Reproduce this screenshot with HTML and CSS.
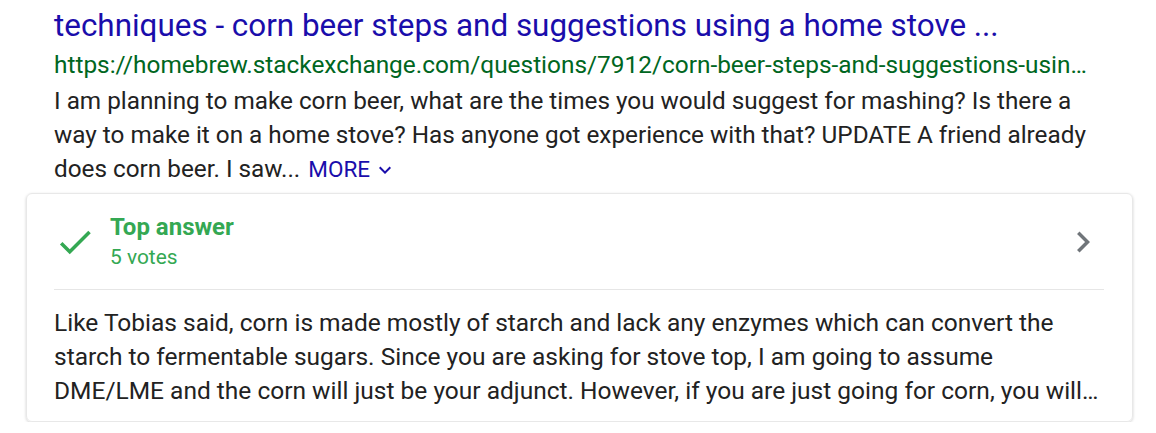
FILE: index.html
```html
<!DOCTYPE html>
<html>
<head>
<meta charset="utf-8">
<link rel="stylesheet" href="styles.css">
</head>
<body>
<div class="result">
  <div class="head">
    <a class="title" href="#">techniques - corn beer steps and suggestions using a home stove ...</a>
    <div class="url">https://homebrew.stackexchange.com/questions/7912/corn-beer-steps-and-suggestions-usin…</div>
    <p class="snippet">I am planning to make corn beer, what are the times you would suggest for mashing? Is there a way to make it on a home stove? Has anyone got experience with that? UPDATE A friend already does corn beer. I saw... <a class="more" href="#"><span>MORE</span><svg class="more-ico" viewBox="0 0 24 24" width="24" height="24"><path d="M7.41 8.59 12 13.17l4.59-4.58L18 10l-6 6-6-6z"/></svg></a></p>
  </div>
  <div class="card">
    <div class="card-head">
      <svg class="check" viewBox="0 0 24 24" width="42" height="42"><path d="M9 16.17 4.83 12l-1.42 1.41L9 19 21 7l-1.41-1.41z"/></svg>
      <div class="meta">
        <div class="label">Top answer</div>
        <div class="votes">5 votes</div>
      </div>
      <svg class="chev" viewBox="0 0 24 24" width="42" height="42"><path d="M10 6 8.59 7.41 13.17 12l-4.58 4.59L10 18l6-6z"/></svg>
    </div>
    <p class="answer">Like Tobias said, corn is made mostly of starch and lack any enzymes which can convert the starch to fermentable sugars. Since you are asking for stove top, I am going to assume DME/LME and the corn will just be your adjunct. However, if you are just going for corn, you will…</p>
  </div>
</div>
</body>
</html>
```

FILE: styles.css
```css
html, body {
  margin: 0;
  padding: 0;
  background: #fff;
}
body {
  font-family: Roboto, "Liberation Sans", Arial, sans-serif;
  color: #222;
}
.result {
  width: 1156px;
}
.head {
  padding: 6px 0 0 54px;
}
.title {
  display: block;
  font-size: 31.4px;
  line-height: 40px;
  color: #1a0dab;
  text-decoration: none;
  white-space: nowrap;
}
.url {
  font-size: 24.4px;
  line-height: 38px;
  color: #006621;
  white-space: nowrap;
}
.snippet {
  margin: 0;
  width: 1060px;
  font-size: 24.3px;
  line-height: 34px;
  color: #222;
}
.more {
  display: inline-flex;
  align-items: center;
  gap: 3px;
  margin-left: 2px;
  color: #1a0dab;
  text-decoration: none;
  font-size: 22.5px;
  line-height: 26px;
  white-space: nowrap;
}
.more-ico {
  flex: none;
  fill: #1a0dab;
  margin-top: 2px;
}
.card {
  margin: 7px 0 0 26px;
  width: 1107px;
  box-sizing: border-box;
  border: 1px solid #e8e8e8;
  border-radius: 6px;
  box-shadow: 0 1px 3px rgba(0, 0, 0, 0.18);
  padding: 0 28px 13px 27px;
}
.card-head {
  height: 95px;
  display: flex;
  align-items: center;
  border-bottom: 1px solid #e6e6e6;
}
.check {
  fill: #34a853;
  flex: none;
}
.meta {
  margin-left: 14px;
  flex: 1;
}
.label {
  font-size: 24px;
  line-height: 30px;
  font-weight: 700;
  color: #34a853;
}
.votes {
  font-size: 20.9px;
  line-height: 30px;
  color: #34a853;
}
.chev {
  fill: #70757a;
  flex: none;
}
.answer {
  margin: 16px 0 0;
  width: 1048px;
  font-size: 24.5px;
  line-height: 34px;
  color: #222;
}
```
